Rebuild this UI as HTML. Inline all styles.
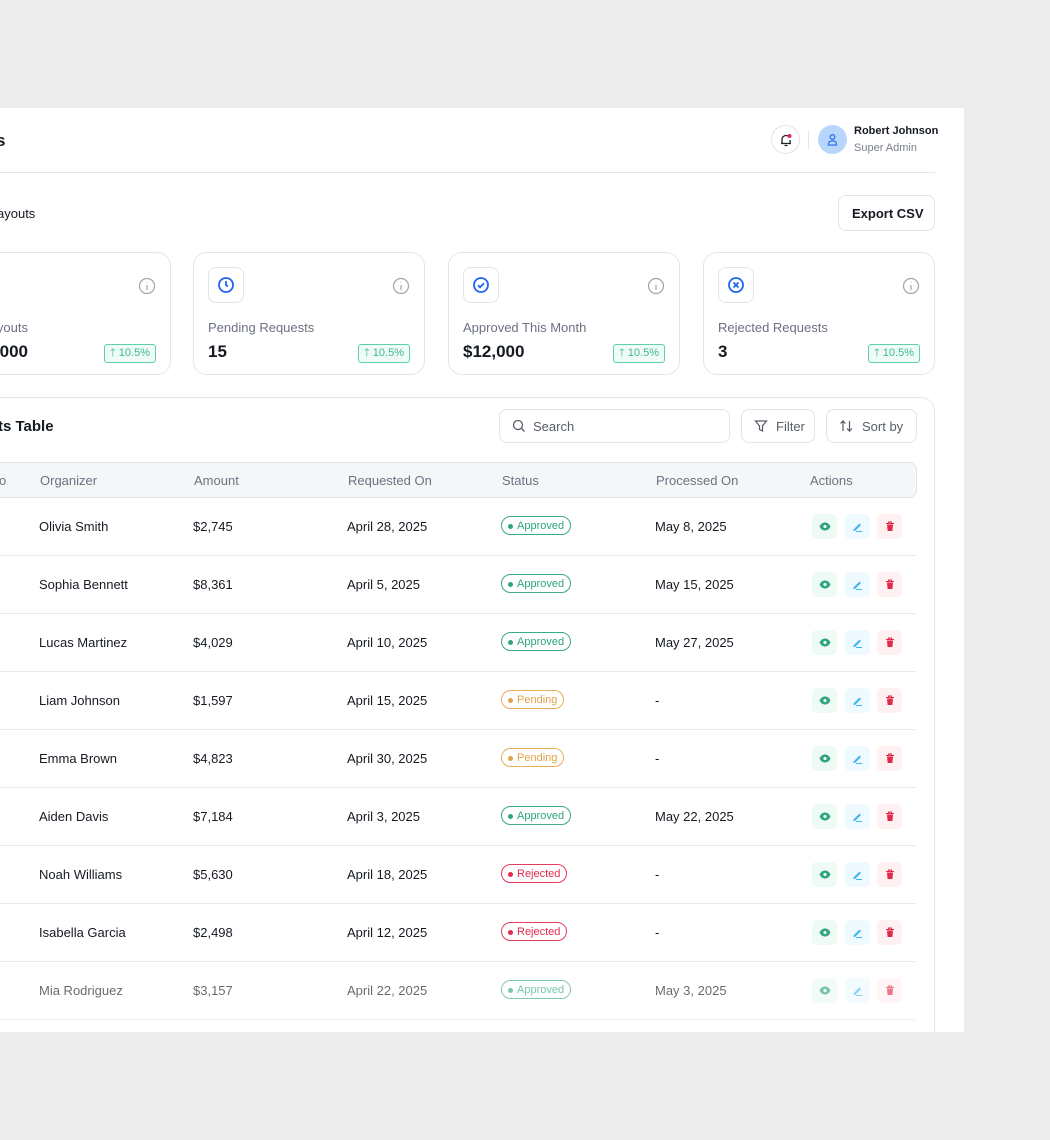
<!DOCTYPE html>
<html><head><meta charset="utf-8"><style>
*{box-sizing:border-box;margin:0;padding:0}
body{width:1050px;height:1140px;background:#ececec;font-family:"Liberation Sans",sans-serif;color:#151a22;position:relative;overflow:hidden}
.panel{position:absolute;left:0;top:108px;width:964px;height:924px;background:#fff;overflow:hidden}
.a{position:absolute}
.card{position:absolute;top:144px;height:123px;border:1px solid #e3e5ea;border-radius:14px;background:#fff}
.ib{position:absolute;left:14px;top:14px;width:36px;height:36px;border:1px solid #e3e5ea;border-radius:8px;display:flex;align-items:center;justify-content:center}
.info{position:absolute;right:14px;top:24px}
.lbl{position:absolute;left:14px;top:67px;font-size:13px;color:#6b7280}
.val{position:absolute;left:14px;top:89px;font-size:17px;font-weight:bold}
.pct{position:absolute;right:14px;top:91px;height:19px;padding:0 5px;border:1px solid #5fcfae;background:#effbf7;border-radius:3px;font-size:11px;color:#3db891;line-height:17px}
.btn{position:absolute;border:1px solid #e1e3e8;border-radius:8px;background:#fff;font-size:13px;color:#555c68;display:flex;align-items:center;gap:8px;padding-left:12px}
.row{position:absolute;left:0;width:916px;height:58px;border-bottom:1px solid #e7e8eb;font-size:13px}
.row span{position:absolute;top:21px}
.badge{position:absolute;top:18px;left:501px;height:19px;border:1px solid;border-radius:10px;font-size:11px;line-height:18px;padding:0 6px 0 15px}
.badge:before{content:"";position:absolute;left:6px;top:7px;width:5px;height:5px;border-radius:50%;background:currentColor}
.ap{color:#2ea57e;border-color:#3aab87}
.pe{color:#e0a24a;border-color:#e7ae5c}
.re{color:#e2294b;border-color:#e43d5b}
.act{position:absolute;top:16px;width:25px;height:25px;border-radius:5px;display:flex;align-items:center;justify-content:center}
</style></head><body>
<div class="panel">
<div class="a" style="left:-4px;top:23px;font-size:17px;font-weight:bold">s</div>
<div class="a" style="left:771px;top:17px;width:29px;height:29px;border:1px solid #e1e3e8;border-radius:50%;display:flex;align-items:center;justify-content:center">
<svg width="14" height="14" viewBox="0 0 14 14" fill="none" stroke="#222" stroke-width="1.3"><path d="M3 10V6.5a4 4 0 0 1 6-3.4M11 7v3M2 10.5h10M5.5 12.5h3"/><circle cx="10.5" cy="3" r="2" fill="#e2294b" stroke="none"/></svg></div>
<div class="a" style="left:808px;top:23px;width:1px;height:18px;background:#e1e3e8"></div>
<div class="a" style="left:818px;top:17px;width:29px;height:29px;border-radius:50%;background:#b8d5fb;display:flex;align-items:center;justify-content:center">
<svg width="13" height="13" viewBox="0 0 13 13" fill="none" stroke="#2f73f0" stroke-width="1.3"><circle cx="6.5" cy="4" r="2.3"/><path d="M2.5 12v-1a3 3 0 0 1 3-3h2a3 3 0 0 1 3 3v1z"/></svg></div>
<div class="a" style="left:854px;top:17px;font-size:11px;font-weight:bold">Robert Johnson</div>
<div class="a" style="left:854px;top:34px;font-size:11px;color:#7a808b">Super Admin</div>
<div class="a" style="left:0;top:64px;width:935px;height:1px;background:#e3e5ea"></div>
<div class="a" style="left:-3px;top:98px;font-size:13px">ayouts</div>
<div class="btn" style="left:838px;top:87px;width:97px;height:36px;color:#151a22;font-weight:bold;padding-left:13px">Export CSV</div>

<div class="card" style="left:-60px;width:231px"><svg class="info" width="18" height="18" viewBox="0 0 18 18" fill="none" stroke="#a0a4ab" stroke-width="1.2"><circle cx="9" cy="9" r="7.5"/><path d="M9 8v5M9 5.3v.4"/></svg><div class="lbl" style="left:auto;right:142px">Payouts</div><div class="val" style="left:auto;right:142px">$20,000</div><div class="pct">🡑 10.5%</div></div>
<div class="card" style="left:193px;width:232px"><div class="ib"><svg width="18" height="18" viewBox="0 0 18 18" fill="none" stroke="#1f64f0" stroke-width="1.8"><circle cx="9" cy="9" r="7"/><path d="M9 5v4l2 1.5"/></svg></div><svg class="info" width="18" height="18" viewBox="0 0 18 18" fill="none" stroke="#a0a4ab" stroke-width="1.2"><circle cx="9" cy="9" r="7.5"/><path d="M9 8v5M9 5.3v.4"/></svg><div class="lbl">Pending Requests</div><div class="val">15</div><div class="pct">🡑 10.5%</div></div>
<div class="card" style="left:448px;width:232px"><div class="ib"><svg width="18" height="18" viewBox="0 0 18 18" fill="none" stroke="#1f64f0" stroke-width="1.8"><circle cx="9" cy="9" r="7"/><path d="M6 9.2l2 2 4-4"/></svg></div><svg class="info" width="18" height="18" viewBox="0 0 18 18" fill="none" stroke="#a0a4ab" stroke-width="1.2"><circle cx="9" cy="9" r="7.5"/><path d="M9 8v5M9 5.3v.4"/></svg><div class="lbl">Approved This Month</div><div class="val">$12,000</div><div class="pct">🡑 10.5%</div></div>
<div class="card" style="left:703px;width:232px"><div class="ib"><svg width="18" height="18" viewBox="0 0 18 18" fill="none" stroke="#1f64f0" stroke-width="1.8"><circle cx="9" cy="9" r="7"/><path d="M6.5 6.5l5 5M11.5 6.5l-5 5"/></svg></div><svg class="info" width="18" height="18" viewBox="0 0 18 18" fill="none" stroke="#a0a4ab" stroke-width="1.2"><circle cx="9" cy="9" r="7.5"/><path d="M9 8v5M9 5.3v.4"/></svg><div class="lbl">Rejected Requests</div><div class="val">3</div><div class="pct">🡑 10.5%</div></div>

<div class="a" style="left:-40px;top:289px;width:975px;height:660px;border:1px solid #e3e5ea;border-radius:14px"></div>
<div class="a" style="left:-2px;top:310px;font-size:15px;font-weight:bold">ts Table</div>
<div class="btn" style="left:499px;top:301px;width:231px;height:34px;gap:7px"><svg width="14" height="14" viewBox="0 0 14 14" fill="none" stroke="#555c68" stroke-width="1.3"><circle cx="6" cy="6" r="4.5"/><path d="M9.5 9.5l3 3"/></svg>Search</div>
<div class="btn" style="left:741px;top:301px;width:74px;height:34px"><svg width="14" height="14" viewBox="0 0 14 14" fill="none" stroke="#555c68" stroke-width="1.2"><path d="M1.5 2h11L8.5 7v5l-3-1.5V7z"/></svg>Filter</div>
<div class="btn" style="left:826px;top:301px;width:91px;height:34px"><svg width="15" height="14" viewBox="0 0 15 14" fill="none" stroke="#555c68" stroke-width="1.2"><path d="M4 12V2L1.5 4.5M4 2l2.5 2.5M10.5 2v10L8 9.5M10.5 12L13 9.5"/></svg>Sort by</div>

<div class="a" style="left:-20px;top:354px;width:937px;height:36px;background:#f5f6f8;border:1px solid #e3e5ea;border-radius:8px;font-size:13px;color:#6b7280">
<span class="a" style="left:18px;top:10px">o</span><span class="a" style="left:59px;top:10px">Organizer</span><span class="a" style="left:213px;top:10px">Amount</span><span class="a" style="left:367px;top:10px">Requested On</span><span class="a" style="left:521px;top:10px">Status</span><span class="a" style="left:675px;top:10px">Processed On</span><span class="a" style="left:829px;top:10px">Actions</span></div>

<div id="rows"></div>
</div>
<script>
var d=[["Olivia Smith","$2,745","April 28, 2025","ap","May 8, 2025"],["Sophia Bennett","$8,361","April 5, 2025","ap","May 15, 2025"],["Lucas Martinez","$4,029","April 10, 2025","ap","May 27, 2025"],["Liam Johnson","$1,597","April 15, 2025","pe","-"],["Emma Brown","$4,823","April 30, 2025","pe","-"],["Aiden Davis","$7,184","April 3, 2025","ap","May 22, 2025"],["Noah Williams","$5,630","April 18, 2025","re","-"],["Isabella Garcia","$2,498","April 12, 2025","re","-"],["Mia Rodriguez","$3,157","April 22, 2025","ap","May 3, 2025"]];
var nm={ap:"Approved",pe:"Pending",re:"Rejected"},h="";
var eye='<svg width="12" height="9" viewBox="0 0 12 9"><path d="M0.5 4.5C2 1.5 4 0.5 6 0.5s4 1 5.5 4C10 7.5 8 8.5 6 8.5S2 7.5 0.5 4.5z" fill="#2ea57e"/><circle cx="6" cy="4.5" r="1.6" fill="#eefaf6"/></svg>';
var pen='<svg width="11" height="11" viewBox="0 0 11 11"><path d="M1.5 8.5L7.5 2.5l1.5 1.5-6 6H1.5z" fill="#3fb6f0"/><path d="M4 10.5h6" stroke="#3fb6f0" stroke-width="1"/></svg>';
var tr='<svg width="10" height="11" viewBox="0 0 10 11"><path d="M1 2.5h8M3.5 2.5V1h3v1.5" stroke="#e2294b" stroke-width="1.1" fill="none"/><path d="M2 3.5h6l-.6 6.5H2.6z" fill="#e2294b"/></svg>';
d.forEach(function(r,i){var t=498+i*58-108;
h+='<div class="row" style="top:'+t+'px;'+(i==8?'opacity:.65;':'')+'"><span style="left:39px">'+r[0]+'</span><span style="left:193px">'+r[1]+'</span><span style="left:347px">'+r[2]+'</span><div class="badge '+r[3]+'">'+nm[r[3]]+'</div><span style="left:655px">'+r[4]+'</span><div class="act" style="left:812px;background:#eefaf6">'+eye+'</div><div class="act" style="left:845px;background:#eefaff">'+pen+'</div><div class="act" style="left:877px;background:#fff0f2">'+tr+'</div></div>';});
document.getElementById("rows").innerHTML=h;
</script>
</body></html>
